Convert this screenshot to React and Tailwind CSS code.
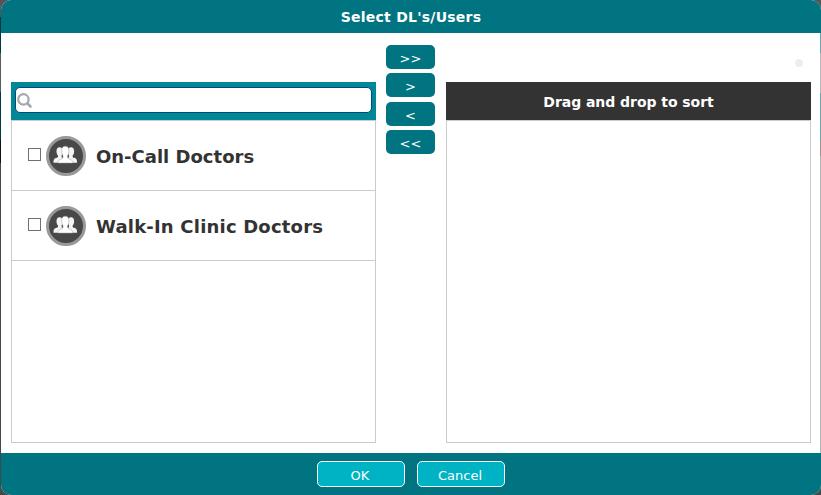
const USERS = [
  { name: "On-Call Doctors", tracking: "tracking-normal" },
  { name: "Walk-In Clinic Doctors", tracking: "tracking-[0.2px]" },
];

function GroupIcon() {
  return (
    <svg className="block h-10 w-10 shrink-0" viewBox="0 0 40 40">
      <circle cx="20" cy="20" r="18.5" fill="#484848" stroke="#999999" strokeWidth="3" />
      <g fill="#f4f4f4">
        <ellipse cx="13.600" cy="15.500" rx="3.100" ry="4.200" />
        <path d="M12 18h3.600v3.200l2.500 1.500v4H7.500c0-3.300.8-4.200 3.100-4.900.9-.3 1.400-.7 1.400-1.400z" />
        <ellipse cx="25" cy="15.500" rx="3.100" ry="4.200" />
        <path d="M26.600 18H23v3.200l-2.500 1.500v4h10.600c0-3.300-.8-4.200-3.100-4.900-.9-.3-1.400-.7-1.400-1.400z" />
      </g>
      <path
        fill="#fff"
        stroke="#a0a0a0"
        strokeWidth=".5"
        d="M19.300 10.200c2.400 0 3.600 1.500 3.600 4.200 0 2.300-.5 4-1.300 5.200v1.900c0 .8.700 1.200 1.900 1.600 2.100.7 3.300 1.500 3.300 3.900h-15c0-2.400 1.200-3.200 3.300-3.900 1.200-.4 1.900-.8 1.900-1.600v-1.900c-.8-1.200-1.300-2.900-1.300-5.200 0-2.700 1.200-4.200 3.600-4.200z"
      />
    </svg>
  );
}

function UserRow({ name, tracking }) {
  return (
    <label className="flex h-[70px] items-center border-b border-[#c8cccc] pl-4">
      <input type="checkbox" className="mb-[3px] h-[13px] w-[13px] shrink-0 appearance-none border border-[#707070] bg-white" />
      <span className="ml-[5px]"><GroupIcon /></span>
      <span className={`ml-[10px] whitespace-nowrap pt-[2px] text-[18px] font-bold leading-6 text-[#333] ${tracking}`}>{name}</span>
    </label>
  );
}

export default function App() {
  return (
    <div className="flex h-[495px] w-[821px] bg-[linear-gradient(#555_0_17px,#003a40_17px_53px,#5c5c5c_53px_92px,#003a40_92px_140px,#101010_140px_163px,#3e4b46_163px)] pl-px font-['DejaVu_Sans',Verdana,sans-serif]">
      <div className="flex w-[820px] flex-col overflow-hidden rounded-[10px] bg-white">
        <header className="flex h-[33px] shrink-0 items-center justify-center bg-[#007481] pt-[2px] text-[14px] font-bold tracking-[0.25px] text-white">
          Select DL's/Users
        </header>
        <main className="flex flex-1 pl-[10px]">
          <section className="mt-[49px] h-[361px] w-[365px]">
            <div className="h-[38px] bg-[#008896] px-1 pt-[5px]">
              <div className="flex h-[26px] items-center rounded-[5px] border border-[#004a78] bg-white pl-px">
                <svg className="mt-px h-4 w-4 shrink-0" viewBox="0 0 16 16" fill="none" stroke="#a3a8ad">
                  <circle cx="6.400" cy="6.400" r="5.200" strokeWidth="2.200" />
                  <path d="M10.500 10.500l3 3" strokeWidth="2.600" strokeLinecap="round" />
                </svg>
                <input className="min-w-0 flex-1 outline-none" aria-label="Search" />
              </div>
            </div>
            <div className="h-[323px] border border-[#c8cccc]">
              {USERS.map((user) => <UserRow key={user.name} {...user} />)}
            </div>
          </section>
          <div className="ml-[10px] mt-3 flex h-[109px] w-[49px] flex-col justify-between">
            {[">>", ">", "<", "<<"].map((label) => (
              <button key={label} className="h-6 rounded-[5px] bg-[#007481] pt-[3px] text-[13px] leading-[21px] text-white">{label}</button>
            ))}
          </div>
          <section className="ml-[11px] w-[365px]">
            <div className="flex h-[49px] items-center justify-end pr-2 pt-[11px]">
              <span className="h-2 w-2 rounded-full bg-[#ededed]" />
            </div>
            <div className="flex h-[38px] items-center justify-center bg-[#333] pt-[2px] text-[14px] font-bold tracking-[-0.05px] text-white">
              Drag and drop to sort
            </div>
            <div className="h-[323px] border border-[#c8cccc]" />
          </section>
          <div className="ml-auto w-px bg-[linear-gradient(#6aa5ab_0_20px,#b8bbbb_20px_60px,#6aa5ab_60px_107px,#989292_107px_123px,#b0b8b5_123px)]" />
        </main>
        <footer className="flex h-[42px] shrink-0 justify-center gap-3 bg-[#007481] pt-2">
          {["OK", "Cancel"].map((label) => (
            <button key={label} className="h-[26px] w-[88px] rounded-[5px] border border-white bg-[#00b3c4] pr-[2px] pt-[3px] text-[13px] leading-[21px] text-white">{label}</button>
          ))}
        </footer>
      </div>
    </div>
  );
}
